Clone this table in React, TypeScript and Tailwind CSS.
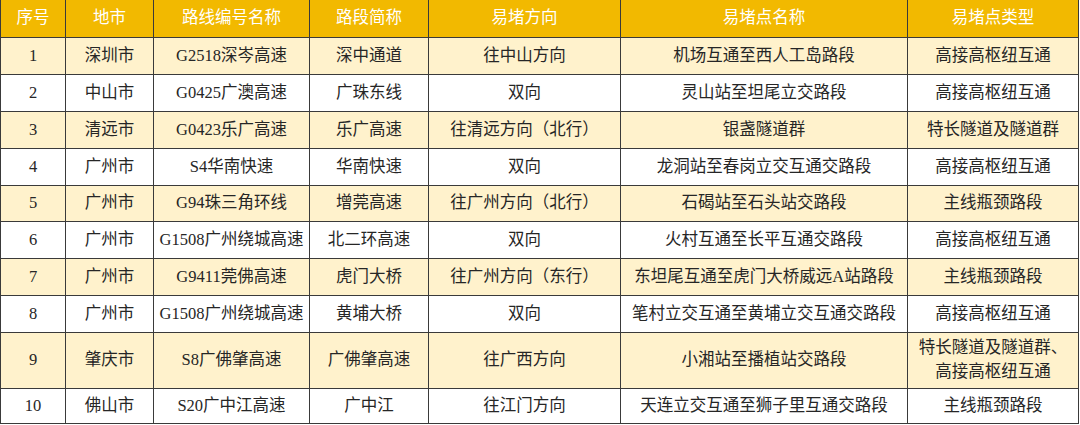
import React from "react";

const cols = [65, 88, 156, 119, 192, 287, 171];
const headers = ["序号", "地市", "路线编号名称", "路段简称", "易堵方向", "易堵点名称", "易堵点类型"];

const rows: { cells: React.ReactNode[]; h: string }[] = [
  { cells: ["1", "深圳市", "G2518深岑高速", "深中通道", "往中山方向", "机场互通至西人工岛路段", "高接高枢纽互通"], h: "h-[37px]" },
  { cells: ["2", "中山市", "G0425广澳高速", "广珠东线", "双向", "灵山站至坦尾立交路段", "高接高枢纽互通"], h: "h-[37px]" },
  { cells: ["3", "清远市", "G0423乐广高速", "乐广高速", "往清远方向（北行）", "银盏隧道群", "特长隧道及隧道群"], h: "h-[37px]" },
  { cells: ["4", "广州市", "S4华南快速", "华南快速", "双向", "龙洞站至春岗立交互通交路段", "高接高枢纽互通"], h: "h-[37px]" },
  { cells: ["5", "广州市", "G94珠三角环线", "增莞高速", "往广州方向（北行）", "石碣站至石头站交路段", "主线瓶颈路段"], h: "h-[36px]" },
  { cells: ["6", "广州市", "G1508广州绕城高速", "北二环高速", "双向", "火村互通至长平互通交路段", "高接高枢纽互通"], h: "h-[37px]" },
  { cells: ["7", "广州市", "G9411莞佛高速", "虎门大桥", "往广州方向（东行）", "东坦尾互通至虎门大桥威远A站路段", "主线瓶颈路段"], h: "h-[37px]" },
  { cells: ["8", "广州市", "G1508广州绕城高速", "黄埔大桥", "双向", "笔村立交互通至黄埔立交互通交路段", "高接高枢纽互通"], h: "h-[37px]" },
  {
    cells: [
      "9",
      "肇庆市",
      "S8广佛肇高速",
      "广佛肇高速",
      "往广西方向",
      "小湘站至播植站交路段",
      <>
        特长隧道及隧道群、
        <br />
        高接高枢纽互通
      </>,
    ],
    h: "h-[56px]",
  },
  { cells: ["10", "佛山市", "S20广中江高速", "广中江", "往江门方向", "天连立交互通至狮子里互通交路段", "主线瓶颈路段"], h: "h-[35px]" },
];

export default function App() {
  return (
    <div
      className="w-[1080px] h-[425px] bg-white overflow-hidden"
      style={{ fontFamily: '"Liberation Serif", "Noto Sans CJK SC", serif' }}
    >
      <table className="table-fixed border-collapse w-[1078px] text-[16.5px] leading-[24px]">
        <colgroup>
          {cols.map((w, i) => (
            <col key={i} style={{ width: w }} />
          ))}
        </colgroup>
        <thead>
          <tr className="h-[37px] bg-[#f2b900]">
            {headers.map((h, i) => (
              <th
                key={i}
                className="font-normal text-white text-center p-0 border-x border-b border-[#3a3a3a] border-t-0"
              >
                {h}
              </th>
            ))}
          </tr>
        </thead>
        <tbody>
          {rows.map((r, ri) => (
            <tr key={ri} className={`${r.h} ${ri % 2 === 0 ? "bg-[#fff2cc]" : "bg-white"}`}>
              {r.cells.map((c, ci) => (
                <td
                  key={ci}
                  className="text-center text-[#262626] p-0 border border-[#3a3a3a] align-middle"
                >
                  {c}
                </td>
              ))}
            </tr>
          ))}
        </tbody>
      </table>
    </div>
  );
}
